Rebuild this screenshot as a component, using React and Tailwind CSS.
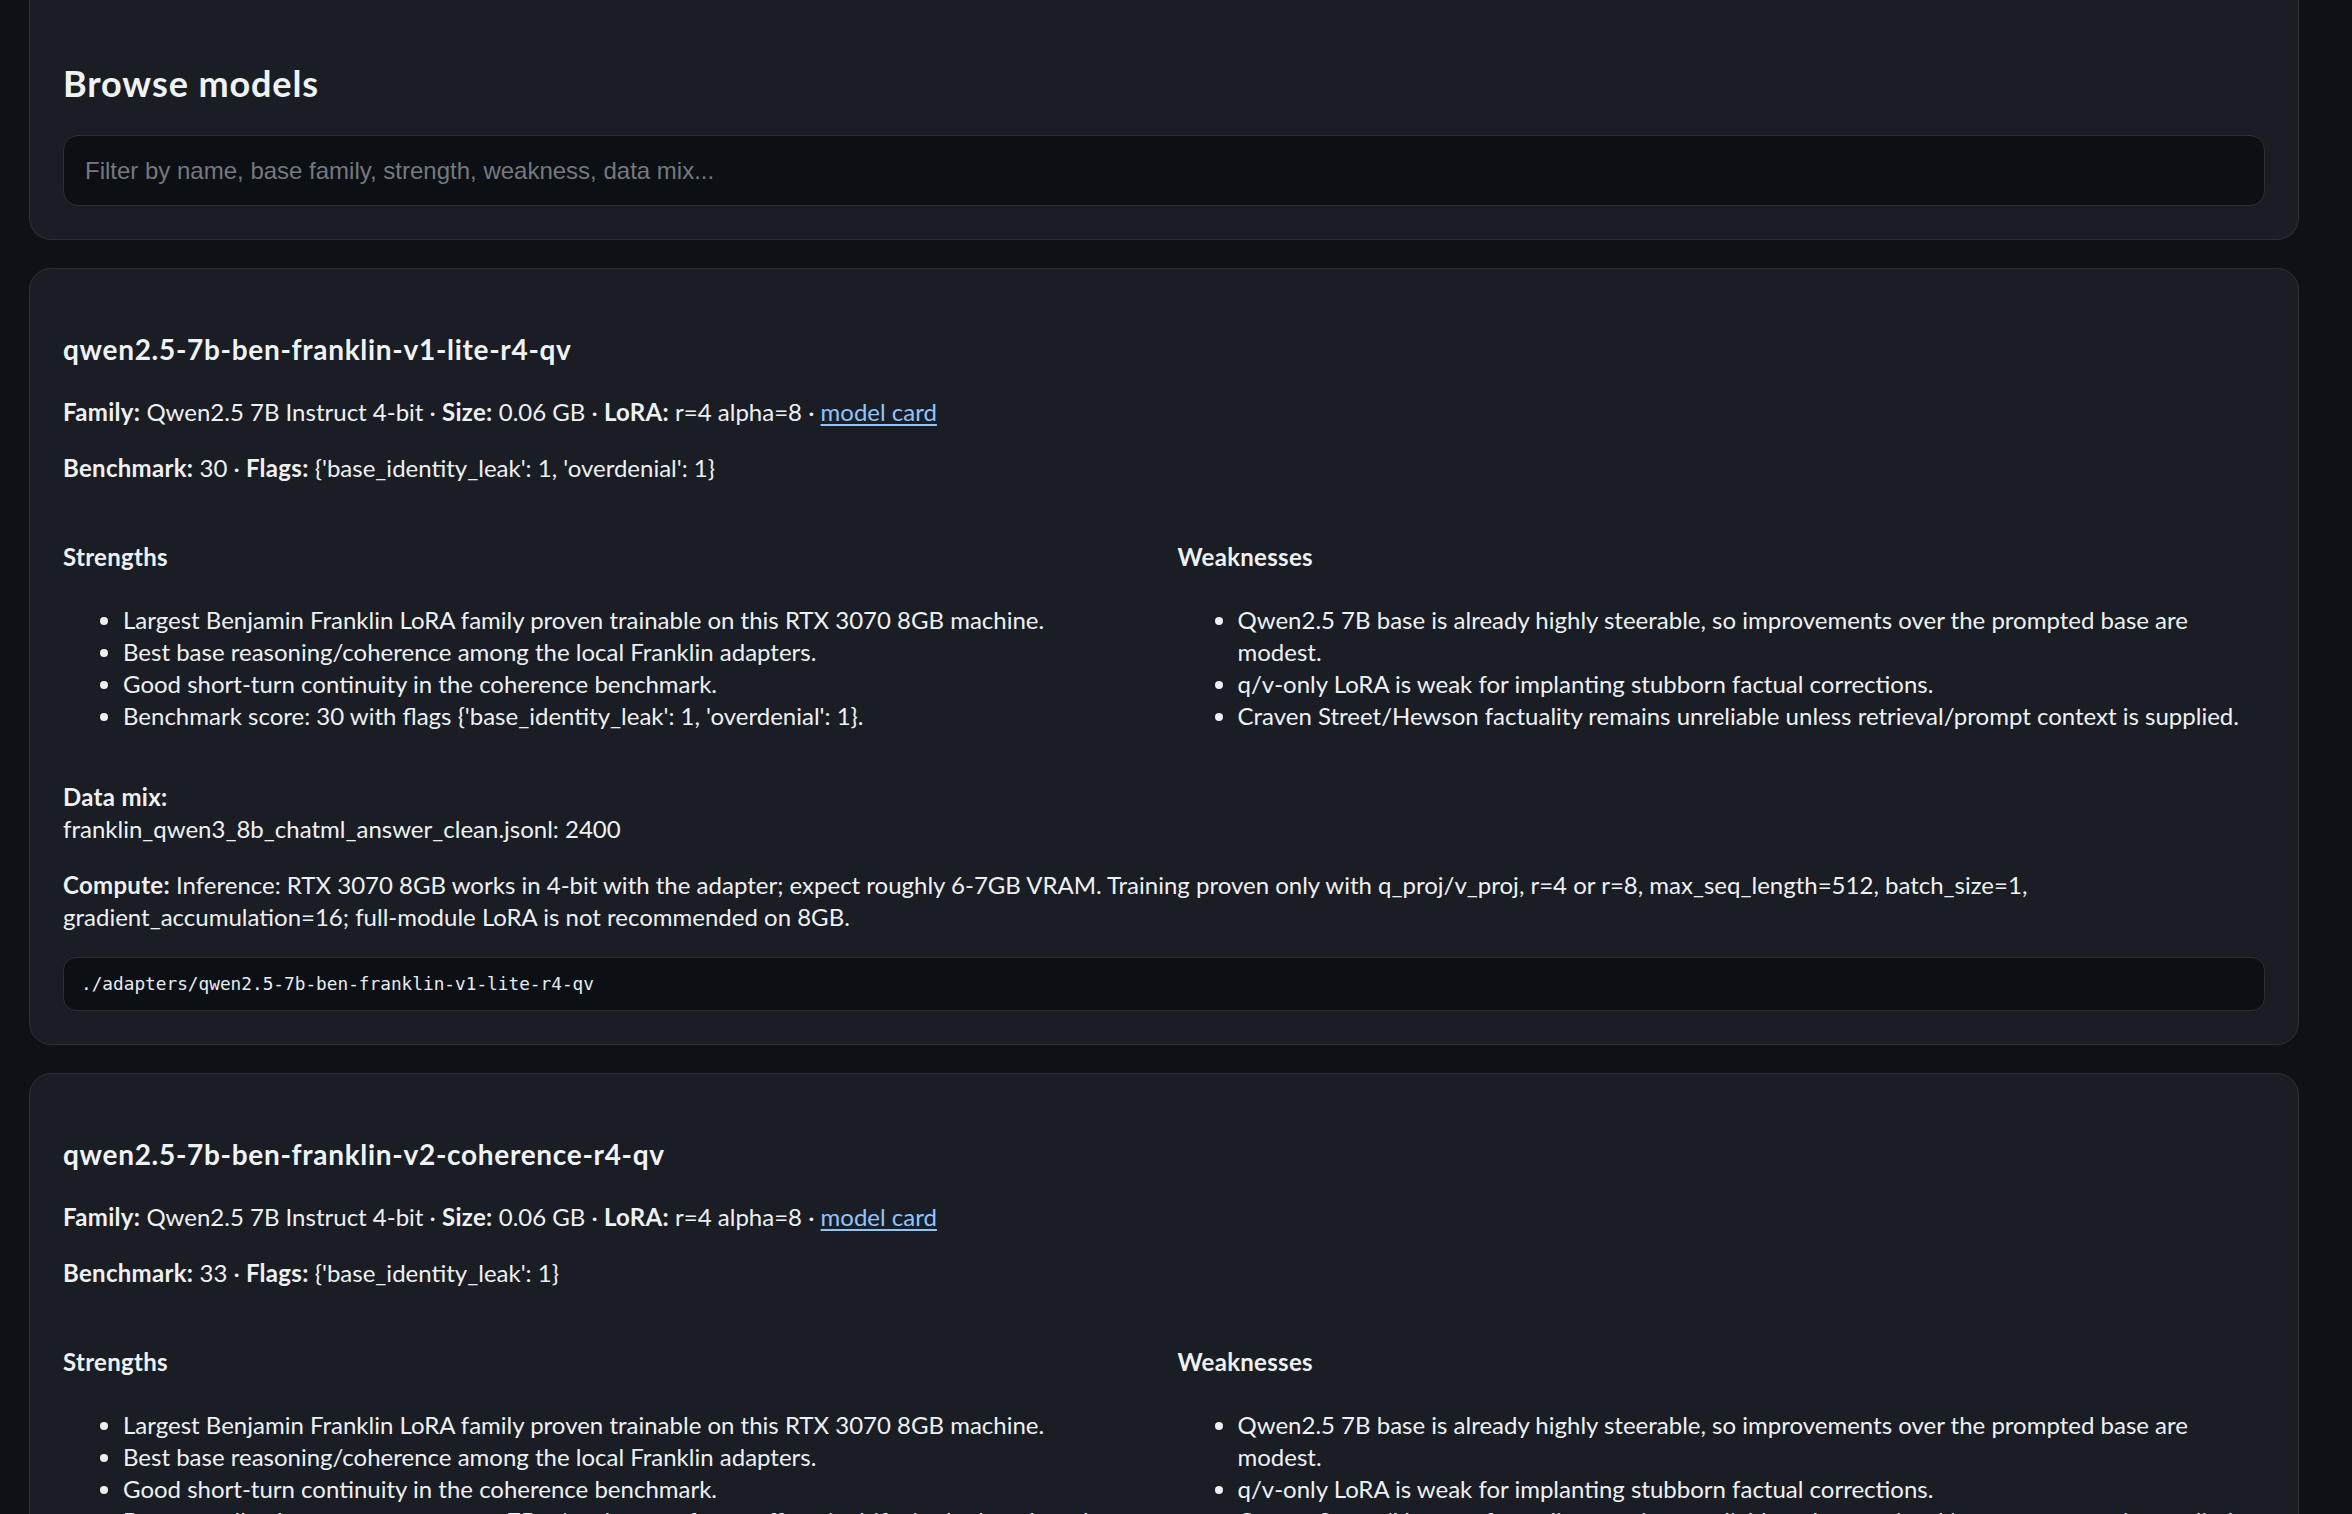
import React from "react";

const models = [
  {
    name: "qwen2.5-7b-ben-franklin-v1-lite-r4-qv",
    benchmark: 30,
    flags: "{'base_identity_leak': 1, 'overdenial': 1}",
    strengths: [
      "Largest Benjamin Franklin LoRA family proven trainable on this RTX 3070 8GB machine.",
      "Best base reasoning/coherence among the local Franklin adapters.",
      "Good short-turn continuity in the coherence benchmark.",
      "Benchmark score: 30 with flags {'base_identity_leak': 1, 'overdenial': 1}.",
    ],
    path: "./adapters/qwen2.5-7b-ben-franklin-v1-lite-r4-qv",
  },
  {
    name: "qwen2.5-7b-ben-franklin-v2-coherence-r4-qv",
    benchmark: 33,
    flags: "{'base_identity_leak': 1}",
    strengths: [
      "Largest Benjamin Franklin LoRA family proven trainable on this RTX 3070 8GB machine.",
      "Best base reasoning/coherence among the local Franklin adapters.",
      "Good short-turn continuity in the coherence benchmark.",
      "Best overall coherence score among 7B q/v adapters; fewer off-topic drifts in the benchmark.",
    ],
    path: "./adapters/qwen2.5-7b-ben-franklin-v2-coherence-r4-qv",
  },
];

const weaknesses = [
  "Qwen2.5 7B base is already highly steerable, so improvements over the prompted base are modest.",
  "q/v-only LoRA is weak for implanting stubborn factual corrections.",
  "Craven Street/Hewson factuality remains unreliable unless retrieval/prompt context is supplied.",
];

function ModelCard({ m }) {
  return (
    <div className="rounded-[22px] border border-[#2b3038] bg-[#1a1d24] px-[33px] pt-[62px] pb-[33px]">
      <h3 className="text-[28px] leading-[37px] font-bold tracking-[0.7px] text-[#f0f3f6]">{m.name}</h3>
      <p className="mt-[28px]">
        <strong className="tracking-[0.3px]">Family:</strong> Qwen2.5 7B Instruct 4-bit ·{" "}
        <strong className="tracking-[0.3px]">Size:</strong> 0.06 GB ·{" "}
        <strong className="tracking-[0.3px]">LoRA:</strong> r=4 alpha=8 ·{" "}
        <a href="#" className="text-[#8ec5ff] underline underline-offset-[3px]">
          model card
        </a>
      </p>
      <p className="mt-6">
        <strong className="tracking-[0.3px]">Benchmark:</strong> {m.benchmark} ·{" "}
        <strong className="tracking-[0.3px]">Flags:</strong> {m.flags}
      </p>
      <div className="mt-[57px] grid grid-cols-2 gap-x-[27px]">
        <div>
          <h4 className="font-bold tracking-[0.3px]">Strengths</h4>
          <ul className="mt-[31px] list-disc pl-[60px]">
            {m.strengths.map((s, i) => (
              <li key={i}>{s}</li>
            ))}
          </ul>
        </div>
        <div>
          <h4 className="font-bold tracking-[0.3px]">Weaknesses</h4>
          <ul className="mt-[31px] list-disc pl-[60px]">
            {weaknesses.map((s, i) => (
              <li key={i}>{s}</li>
            ))}
          </ul>
        </div>
      </div>
      <p className="mt-[49px]">
        <strong className="tracking-[0.3px]">Data mix:</strong>
        <br />
        franklin_qwen3_8b_chatml_answer_clean.jsonl: 2400
      </p>
      <p className="mt-6">
        <strong className="tracking-[0.3px]">Compute:</strong> Inference: RTX 3070 8GB works in 4-bit with the
        adapter; expect roughly 6-7GB VRAM. Training proven only with q_proj/v_proj, r=4 or r=8,
        max_seq_length=512, batch_size=1, gradient_accumulation=16; full-module LoRA is not recommended on 8GB.
      </p>
      <pre className="mt-[24px] rounded-[13px] border border-[#2b3038] bg-[#0c0f14] px-[17px] py-[14px] font-['DejaVu_Sans_Mono',monospace] text-[17.75px] leading-[24px] text-[#e6edf3]">
        {m.path}
      </pre>
    </div>
  );
}

export default function App() {
  return (
    <div className="h-[1514px] overflow-hidden bg-[#0e1116] pl-[29px] pr-[53px] font-['Lato','Noto_Sans',sans-serif] text-[24px] leading-[32px] text-[#eef1f4]">
      <div className="flex flex-col gap-[28px]">
        <div className="rounded-b-[22px] border border-t-0 border-[#2b3038] bg-[#1a1d24] px-[33px] pt-[59px] pb-[33px]">
          <h2 className="text-[36px] leading-[48px] font-bold tracking-[0.9px] text-[#f0f3f6]">Browse models</h2>
          <input
            type="text"
            placeholder="Filter by name, base family, strength, weakness, data mix..."
            className="mt-[28px] block h-[71px] w-full rounded-[15px] border border-[#2b3038] bg-[#0c0f14] px-[21px] font-['Liberation_Sans',Arial,sans-serif] text-[24px] text-[#e6edf3] outline-none placeholder:text-[#75797f]"
          />
        </div>
        {models.map((m) => (
          <ModelCard key={m.name} m={m} />
        ))}
      </div>
    </div>
  );
}
